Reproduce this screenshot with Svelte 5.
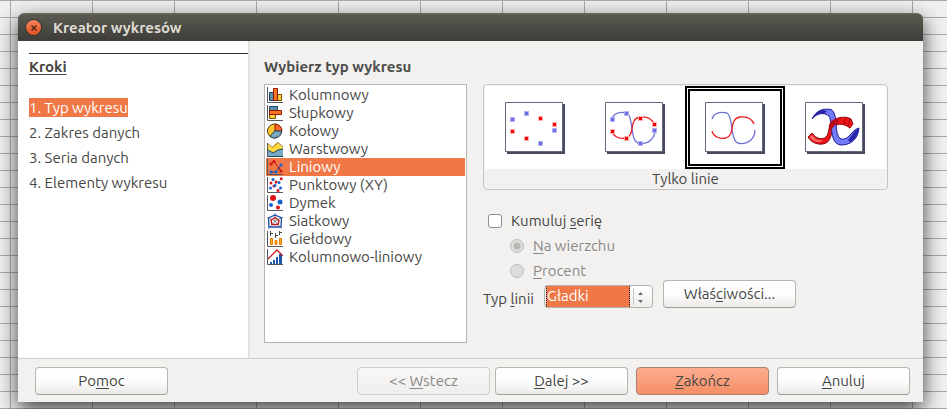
<script>
  const steps = ['1. Typ wykresu', '2. Zakres danych', '3. Seria danych', '4. Elementy wykresu'];
  let step = $state(0);

  const types = [
    ['column', 'Kolumnowy'],
    ['bar', 'Słupkowy'],
    ['pie', 'Kołowy'],
    ['area', 'Warstwowy'],
    ['line', 'Liniowy'],
    ['scatter', 'Punktowy (XY)'],
    ['bubble', 'Dymek'],
    ['net', 'Siatkowy'],
    ['stock', 'Giełdowy'],
    ['combo', 'Kolumnowo-liniowy']
  ];
  let type = $state('line');

  const variants = ['Tylko punkty', 'Punkty i linie', 'Tylko linie', 'Linie 3D'];
  let variant = $state(2);

  let stacked = $state(false);

  const bluePoints = [[7, 17], [21, 11], [35, 41], [49, 28]];
  const redPoints = [[7, 29], [21, 36], [35, 16], [49, 22]];
</script>

{#snippet axes()}
  <path d="M.5 0V15.5H16" fill="none" stroke="#555761" />
{/snippet}

{#snippet dots(points, color, r)}
  {#each points as [x, y]}
    <circle cx={x} cy={y} {r} fill={color} />
  {/each}
{/snippet}

{#snippet typeIcon(name)}
  <svg width="16" height="16" viewBox="0 0 16 16" aria-hidden="true">
    {#if name === 'column'}
      {@render axes()}
      <path d="M2.5 5.5h4v8h-4z" fill="#5e8fb0" stroke="#1d4258" />
      <path d="M10.5 7.5h4v6h-4z" fill="#ffd23c" stroke="#7d4a00" />
      <path d="M6.5 1.5h4v12h-4z" fill="#ff7324" stroke="#8c1c00" />
    {:else if name === 'bar'}
      {@render axes()}
      <path d="M2.5 1.5h8v4h-8z" fill="#5e8fb0" stroke="#1d4258" />
      <path d="M2.5 9.5h6v4h-6z" fill="#ffd23c" stroke="#7d4a00" />
      <path d="M2.5 5.5h12v4h-12z" fill="#ff7324" stroke="#8c1c00" />
    {:else if name === 'pie'}
      <circle cx="7.5" cy="8" r="7" fill="#ffc62e" stroke="#4b3a1c" />
      <path d="M8 8V1a7 7 0 0 1 7 7z" fill="#ff6a2a" stroke="#8c1c00" />
      <path d="M7.5 8H14.5A7 7 0 0 1 3 13.4z" fill="#7ba6bd" stroke="#23475a" />
    {:else if name === 'area'}
      <path d="M1 3L5 7L10 1.5L16 7V16H1z" fill="#ffd83f" />
      <path d="M1 2.5L5 6.5L11 1.5L16 6" fill="none" stroke="#9b6a00" />
      <path d="M1 9L6 12L11 9L16 8V16H1z" fill="#79aac4" />
      <path d="M1 9L6 12L11 9L16 8M1 15.5H16" fill="none" stroke="#174a60" />
      <path d="M.5 2V16" stroke="#555761" />
    {:else if name === 'line'}
      {@render axes()}
      <path d="M4 5L7 2.5L14 12" fill="none" stroke="#b80d0d" />
      <path d="M4 13H9L14 6" fill="none" stroke="#173f91" />
      {@render dots([[4, 5], [7, 2.5], [14, 12]], '#d31212', 1.6)}
      {@render dots([[4, 13], [9, 13], [14, 6]], '#1762d1', 1.6)}
    {:else if name === 'scatter'}
      {@render axes()}
      {@render dots([[4, 6], [9, 5], [14.2, 1.7], [7, 9], [11, 13.5]], '#dd1515', 1.5)}
      {@render dots([[6, 2.5], [12, 5.5], [3.5, 11], [8, 8.5], [13.5, 11]], '#1762d1', 1.5)}
    {:else if name === 'bubble'}
      {@render axes()}
      {@render dots([[6, 3]], '#dd1515', 3)}
      {@render dots([[11, 12.5]], '#dd1515', 2)}
      {@render dots([[13, 7]], '#1762d1', 2.5)}
      {@render dots([[4, 10]], '#1762d1', 2)}
    {:else if name === 'net'}
      <path d="M8 0V8L16 4M8 8L15 16M8 8L1 16M8 8L0 4" fill="none" stroke="#6a6a70" stroke-width=".7" />
      <path d="M1.500 5L8 2L14.500 5L14 14H2z" fill="none" stroke="#164fa8" stroke-width="1.3" />
      <path d="M8 4.5L12 7.5L11 11.5H5L4 7z" fill="none" stroke="#b81414" stroke-width="1.3" />
    {:else if name === 'stock'}
      {@render axes()}
      <path d="M3.5 7.5h2v6h-2zM8 9.500h2v4h-2zM12.500 7.500h2v6h-2z" fill="#ffb11f" stroke="#e47b00" />
      <path d="M3.5 0V5M3.5 2.500H6M8.500 2V7M8.500 4.500H11M12.500 0V4M12.500 1.500H15" fill="none" stroke="#44464e" />
    {:else}
      {@render axes()}
      <path d="M3 13h2v2H3zM6 11h2v4H6zM9 8h2v7H9zM12 5h3v10h-3z" fill="#1c58ac" />
      <path d="M1 10L10 1L16 7" fill="none" stroke="#c91620" stroke-width="1.3" />
    {/if}
  </svg>
{/snippet}

{#snippet markers(points, halo, core)}
  {#each points as [x, y]}
    <rect x={x - 2} y={y - 2} width="5" height="5" fill={halo} />
    <rect x={x - 1} y={y - 1} width="3" height="3" fill={core} />
  {/each}
{/snippet}

{#snippet thumb(kind)}
  <svg width="60" height="52" viewBox="0 0 60 52" aria-hidden="true">
    <path d="M2 2H60V52H2z" fill="#454a5e" />
    <path d="M.5 .5H57.5V49.5H.5z" fill="#fff" stroke="#62677a" />
    {#if kind === 1 || kind === 2}
      <path d="M7 17C9 10 17 10 22 11C29 14 24 41 35 41.5C44 42 50 36 50 28" fill="none" stroke="#6f6fd6" stroke-width="1.3" />
      <path d="M7 29C9 36 16 37 21 36C31 33 23 17 35 15C43 14 47 17 49 22" fill="none" stroke="#ee2020" stroke-width="1.3" />
    {/if}
    {#if kind < 2}
      {@render markers(bluePoints, '#b4b4f4', '#6c6ce4')}
      {@render markers(redPoints, '#ffb0b0', '#f20000')}
    {/if}
    {#if kind === 3}
      <path d="M3 35L7 31C11 37 17 38 21 35C25 31 23 21 28 18C34 15 41 14 46 17L48 22L45 26C40 22 33 21 30 24C26 28 27 38 21 41C15 44 6 41 3 35Z" fill="#ee1218" stroke="#8d0808" />
      <path d="M4.500 35L7 33C11 38 14 39 18 38C17 41 8 41 4.500 35Z" fill="#ff6c6c" />
      <path d="M7 17C11 9 17 6 26 7.500C34 11 28 33 36 37C44 39 46 28 54 26C53 37 46 43 36 43C24 42 28 22 24 14C19 10 12 11 7 17Z" fill="#727af8" stroke="#1c1896" />
      <path d="M7 17C11 9 17 7 22 9L19 12C14 11 10 13 7 17ZM54 26C49 28 47 34 43 38L45 40C51 37 53 33 54 26Z" fill="#2824a8" />
      <path d="M24 26C24 21 26 18 30 17L34 16L33 22C29 23 27 26 26 30Z" fill="#b80c16" />
      <path d="M41 15.5L39 22M45 17L43 24" fill="none" stroke="#a20b0f" />
    {/if}
  </svg>
{/snippet}

<div class="sheet">
  <div class="window" role="dialog" aria-labelledby="title">
    <header>
      <button class="close" aria-label="Zamknij">
        <svg width="8" height="8" viewBox="0 0 8 8"><path d="M1.5 1.5L6.5 6.5M6.5 1.5L1.5 6.5" stroke="#4a2416" stroke-width="1.4" /></svg>
      </button>
      <h1 id="title">Kreator wykresów</h1>
    </header>

    <div class="body">
      <nav>
        <h2>Kroki</h2>
        <ol>
          {#each steps as label, i}
            <li><button class:current={step === i} onclick={() => (step = i)}>{label}</button></li>
          {/each}
        </ol>
      </nav>

      <main>
        <h2 id="types">Wybierz typ wykresu</h2>
        <div class="columns">
          <div class="list" role="listbox" aria-labelledby="types">
            {#each types as [id, label]}
              <button role="option" aria-selected={type === id} onclick={() => (type = id)}>
                {@render typeIcon(id)}<span>{label}</span>
              </button>
            {/each}
          </div>

          <div class="settings">
            <div class="gallery">
              <div class="thumbs">
                {#each variants as label, i}
                  <button class:chosen={variant === i} aria-label={label} onclick={() => (variant = i)}>
                    {@render thumb(i)}
                  </button>
                {/each}
              </div>
              <p>{variants[variant]}</p>
            </div>

            <div class="options">
              <label><input type="checkbox" bind:checked={stacked} /><span>Kumuluj <u>s</u>erię</span></label>
              <label class="sub"><input type="radio" name="stack" checked disabled={!stacked} /><span><u>N</u>a wierzchu</span></label>
              <label class="sub"><input type="radio" name="stack" disabled={!stacked} /><span><u>P</u>rocent</span></label>
            </div>

            <div class="linetype">
              <label for="curve">Typ <u>l</u>inii</label>
              <span class="combo">
                <select id="curve">
                  <option>Gładki</option>
                  <option>Prosty</option>
                </select>
                <svg width="14" height="19" viewBox="0 0 14 19" aria-hidden="true">
                  <path d="M.5 1V18" stroke="#c9c7c4" />
                  <path d="M5 8H10L7.5 5zM5 13H10L7.5 16z" fill="#6b6a67" />
                </svg>
              </span>
              <button class="btn">Właś<u>c</u>iwości...</button>
            </div>
          </div>
        </div>
      </main>
    </div>

    <footer>
      <button class="btn help">Po<u>m</u>oc</button>
      <span class="pair">
        <button class="btn" disabled>&lt;&lt; <u>W</u>stecz</button>
        <button class="btn"><u>D</u>alej &gt;&gt;</button>
      </span>
      <button class="btn finish"><u>Z</u>akończ</button>
      <button class="btn"><u>A</u>nuluj</button>
    </footer>
  </div>
</div>

<style>
  .sheet, .sheet * { box-sizing: border-box; }
  .sheet {
    display: flex;
    min-height: 100vh;
    padding: 13px 24px 7px 18px;
    font: 15px/18px Ubuntu, "Noto Sans", sans-serif;
    color: #464644;
    background:
      repeating-linear-gradient(#a9a9a9 0 1px, transparent 1px 17px),
      repeating-linear-gradient(90deg, transparent 0 10px, #a9a9a9 10px 11px, transparent 11px 82px),
      #f0f0f0;
  }
  h1, h2, p, ol { margin: 0; padding: 0; font-size: 15px; }
  button, select, input { margin: 0; font: inherit; color: inherit; }
  button { border: 0; padding: 0; background: none; white-space: nowrap; }
  u { text-underline-offset: 2px; }

  .window {
    flex: 1;
    display: flex;
    flex-direction: column;
    background: #f2f1f0;
    border-radius: 6px 6px 0 0;
    box-shadow: 0 7px 20px rgba(0, 0, 0, .75);
  }
  header {
    display: flex;
    align-items: center;
    gap: 12px;
    height: 28px;
    padding: 0 8px;
    border-radius: 6px 6px 0 0;
    background: linear-gradient(#5b5a52, #3d3c37);
    border-top: 1px solid #6d6b62;
    color: #dfdbd2;
  }
  .close {
    display: grid;
    place-items: center;
    width: 15px;
    height: 15px;
    border-radius: 50%;
    background: linear-gradient(#f4845c, #e2501f);
    box-shadow: 0 0 0 1px #35332e;
  }

  .body { flex: 1; display: flex; }
  nav {
    width: 232px;
    padding: 12px 0 0 11px;
    background: #fff;
    border-right: 2px solid #e4e2e0;
  }
  nav h2 {
    padding-top: 4px;
    border-top: 1px solid #33333d;
    text-decoration: underline;
    text-underline-offset: 2px;
  }
  ol {
    display: flex;
    flex-direction: column;
    gap: 6px;
    margin-top: 22px;
    list-style: none;
  }
  li { display: flex; }
  li button { line-height: 19px; }
  li .current { background: #f07746; color: #fff; }

  main { flex: 1; padding: 17px 35px 15px 14px; }
  main h2 { color: #4c4c4a; }
  .columns { display: flex; gap: 16px; margin-top: 8px; }
  .list {
    display: flex;
    flex-direction: column;
    width: 203px;
    height: 259px;
    padding: 1px;
    background: #fff;
    border: 1px solid #b9b6b2;
  }
  .list button {
    display: flex;
    align-items: center;
    gap: 6px;
    height: 18px;
    padding-left: 1px;
    line-height: 18px;
  }
  .list [aria-selected="true"] { background: #f07746; color: #fff; }

  .settings { flex: 1; }
  .gallery {
    padding: 1px;
    border: 1px solid #c9c7c4;
    border-radius: 4px;
    text-align: center;
  }
  .thumbs { display: flex; background: #fff; }
  .thumbs button {
    display: grid;
    place-items: center;
    width: 100px;
    height: 83px;
  }
  .thumbs .chosen { box-shadow: inset 0 0 0 2px #000, inset 0 0 0 3px #fff, inset 0 0 0 5px #000; }
  .gallery p { line-height: 19px; }

  .options {
    display: flex;
    flex-direction: column;
    gap: 7px;
    padding: 22px 0 0 5px;
  }
  .options label { display: flex; align-items: center; gap: 9px; }
  .options .sub { padding-left: 22px; color: #8a8987; }
  .options input {
    appearance: none;
    width: 14px;
    height: 14px;
    border: 1px solid #8f8c88;
    border-radius: 3px;
    background: #fff;
  }
  .options input[type="checkbox"]:checked { background: #f07746; }
  .options input[type="radio"] {
    border-radius: 50%;
    border-color: #bfbdba;
    background: #dfdddb;
  }
  .options input[type="radio"]:checked { background: radial-gradient(circle, #b9b7b4 0 3px, #dfdddb 4px); }

  .linetype { display: flex; align-items: flex-end; height: 28px; }
  .linetype label { width: 61px; }
  .combo { position: relative; width: 109px; }
  .combo select {
    appearance: none;
    display: block;
    width: 100%;
    height: 23px;
    padding: 0 26px 1px 2px;
    border: 1px solid #b5b2ae;
    border-radius: 4px;
    color: #fff;
    background:
      linear-gradient(#f07746, #f07746) 1px 0 / 84px 100% no-repeat,
      linear-gradient(#fff, #efeeec);
  }
  .combo select option { color: #3f3f3d; }
  .combo::before {
    content: "";
    position: absolute;
    inset: 1px 23px 1px 2px;
    border: dotted #222;
    border-width: 0 1px;
    pointer-events: none;
  }
  .combo svg { position: absolute; top: 2px; right: 6px; pointer-events: none; }
  .linetype .btn { align-self: flex-start; margin-left: 10px; }

  .btn {
    width: 133px;
    height: 28px;
    border: 1px solid #b8b4ae;
    border-bottom-color: #a19e99;
    border-radius: 4px;
    background: linear-gradient(#fff, #fdfdfd 50%, #ebeae8);
  }
  .btn:disabled { color: #8a8987; border-color: #d0cecb; background: linear-gradient(#f8f8f7, #efeeed); }
  .finish { border-color: #a9806e; background: linear-gradient(#fdae90, #f48e67); }

  footer {
    display: flex;
    gap: 8px;
    padding: 8px 13px 7px 17px;
    border-top: 1px solid #d3d1cf;
  }
  .help { margin-right: auto; }
  .pair { display: flex; gap: 5px; }
</style>
